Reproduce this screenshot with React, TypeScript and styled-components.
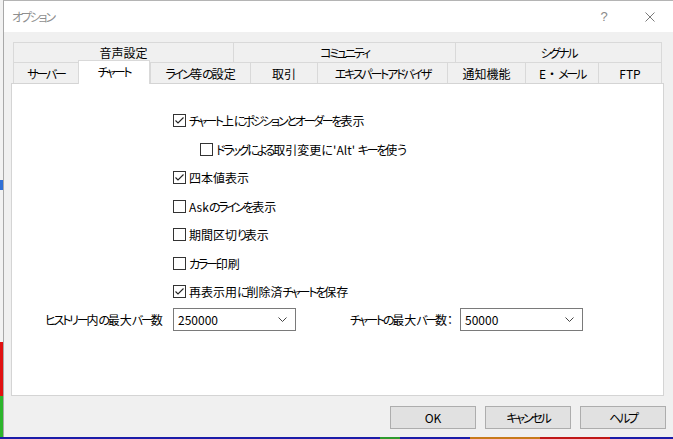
import React from "react";
import styled, { createGlobalStyle } from "styled-components";

const Global = createGlobalStyle`
  html, body { margin: 0; padding: 0; background: #ffffff; }
  body {
    font-family: "Noto Sans CJK JP", "Noto Sans", sans-serif;
    font-feature-settings: "palt";
    font-size: 12px;
    color: #000;
  }
  * { box-sizing: border-box; }
`;

const Page = styled.div`
  width: 673px;
  height: 439px;
  display: flex;
  flex-direction: column;
  overflow: hidden;
`;

const Main = styled.div`
  display: flex;
  flex: 1;
  min-height: 0;
`;

const Backdrop = styled.div`
  width: 3px;
  background: linear-gradient(
    to bottom,
    #f2f2f2 0px,
    #f2f2f2 180px,
    #2f6fd6 180px,
    #2f6fd6 190px,
    #f2f2f2 190px,
    #f2f2f2 342px,
    #e01010 342px,
    #e01010 396px,
    #2cb52c 396px,
    #2cb52c 100%
  );
`;

const BottomStrip = styled.div`
  height: 2px;
  background: linear-gradient(
    to right,
    #1c1ca8 0px,
    #1c1ca8 380px,
    #2e9a2e 380px,
    #2e9a2e 400px,
    #1c1ca8 400px,
    #1c1ca8 470px,
    #c87a1a 470px,
    #c87a1a 540px,
    #c01818 540px,
    #c01818 610px,
    #1c1ca8 610px
  );
`;

const Window = styled.div`
  flex: 1;
  display: flex;
  flex-direction: column;
  border-left: 1px solid #a8a8a8;
  border-top: 1px solid #b4b4b4;
  background: #f0f0f0;
`;

const TitleBar = styled.div`
  height: 31px;
  background: #ffffff;
  display: flex;
  align-items: center;
  justify-content: space-between;
  padding-left: 8px;
`;

const Title = styled.span`
  color: #8f8f8f;
  font-size: 12px;
`;

const TitleButtons = styled.div`
  display: flex;
  height: 100%;
`;

const TitleButton = styled.div`
  width: 46px;
  height: 100%;
  display: flex;
  align-items: center;
  justify-content: center;
  color: #8a8a8a;
  font-family: "Liberation Sans", "Noto Sans", sans-serif;
  font-size: 13px;
`;

const Body = styled.div`
  flex: 1;
  display: flex;
  flex-direction: column;
  padding: 10px 7px 0 7px;
`;

const Tabs = styled.div`
  display: flex;
  flex-direction: column;
  margin-left: 2px;
`;

const TabRow = styled.div<{ $h: number }>`
  display: flex;
  align-items: flex-end;
  height: ${(p) => p.$h}px;
`;

const Tab = styled.div<{ $w: number; $h: number; $last?: boolean }>`
  width: ${(p) => p.$w}px;
  height: ${(p) => p.$h}px;
  display: flex;
  align-items: center;
  justify-content: center;
  border-top: 1px solid #d9d9d9;
  border-left: 1px solid #d9d9d9;
  border-right: ${(p) => (p.$last ? "1px solid #d9d9d9" : "none")};
  background: #f0f0f0;
  color: #000;
  font-size: 12px;
  white-space: nowrap;
`;

const ActiveTab = styled.div<{ $w: number }>`
  position: relative;
  z-index: 1;
  width: ${(p) => p.$w}px;
  height: 24px;
  margin-bottom: -1px;
  display: flex;
  align-items: center;
  justify-content: center;
  padding-bottom: 2px;
  background: #ffffff;
  border: 1px solid #d9d9d9;
  border-bottom: none;
  font-size: 12px;
  white-space: nowrap;
`;

const Panel = styled.div`
  height: 313px;
  margin-right: 2px;
  background: #ffffff;
  border: 1px solid #d4d4d4;
  display: flex;
  flex-direction: column;
`;

const OptionList = styled.div`
  display: flex;
  flex-direction: column;
  gap: 15.5px;
  margin: 30px 0 0 161px;
`;

const OptionRow = styled.label<{ $indent?: number }>`
  display: flex;
  align-items: center;
  height: 13px;
  gap: 3px;
  margin-left: ${(p) => p.$indent ?? 0}px;
  font-size: 12px;
  line-height: 13px;
  white-space: nowrap;
`;

const Box = styled.span`
  width: 13px;
  height: 13px;
  border: 1px solid #333333;
  background: #ffffff;
  display: inline-flex;
  flex-shrink: 0;
`;

const ComboRow = styled.div`
  display: flex;
  align-items: center;
  margin: 9.5px 0 0 33px;
`;

const ComboGroup = styled.div<{ $gap: number }>`
  display: flex;
  align-items: center;
  margin-left: ${(p) => p.$gap}px;
`;

const ComboLabel = styled.span<{ $w: number }>`
  width: ${(p) => p.$w}px;
  font-size: 12px;
  white-space: nowrap;
`;

const Combo = styled.div`
  width: 123px;
  height: 23px;
  border: 1px solid #7a7a7a;
  background: #ffffff;
  display: flex;
  align-items: center;
  justify-content: space-between;
  padding: 0 8px 0 4px;
  font-size: 12px;
`;

const ButtonBar = styled.div`
  display: flex;
  justify-content: flex-end;
  gap: 9px;
  margin-top: 10px;
`;

const Button = styled.div`
  width: 86px;
  height: 23px;
  background: #e1e1e1;
  border: 1px solid #adadad;
  display: flex;
  align-items: center;
  justify-content: center;
  font-size: 12px;
`;

const Kana = styled.span<{ $pad?: boolean }>`
  letter-spacing: -2.2px;
  margin-right: ${(p) => (p.$pad ? "2.5px" : "0")};
`;

const FullWidth = styled.span`
  font-feature-settings: normal;
`;

const KANA_RUN = /([\u3040-\u30fa\u30fc-\u30ff]+|・)/;

function JText({ children }: { children: string }) {
  const parts = children.split(KANA_RUN).filter((p) => p !== "");
  return (
    <>
      {parts.map((p, i) => {
        if (p === "・") return <FullWidth key={i}>{p}</FullWidth>;
        if (/^[\u3040-\u30ff]/.test(p)) {
          const next = parts[i + 1];
          const pad = !!next && /^[\x20-\x7e]/.test(next);
          return (
            <Kana key={i} $pad={pad}>
              {p}
            </Kana>
          );
        }
        return <React.Fragment key={i}>{p}</React.Fragment>;
      })}
    </>
  );
}

const Check = () => (
  <svg width="11" height="11" viewBox="0 0 11 11">
    <path d="M1.5 5.5 L4 8 L9.5 2.5" fill="none" stroke="#222" strokeWidth="1.1" />
  </svg>
);

const Chevron = () => (
  <svg width="9" height="5" viewBox="0 0 9 5">
    <path d="M0.5 0.5 L4.5 4.5 L8.5 0.5" fill="none" stroke="#444" strokeWidth="1" />
  </svg>
);

const CloseIcon = () => (
  <svg width="10" height="10" viewBox="0 0 10 10">
    <path d="M0.5 0.5 L9.5 9.5 M9.5 0.5 L0.5 9.5" stroke="#7a7a7a" strokeWidth="1" />
  </svg>
);

const options: { text: string; checked: boolean; indent?: number }[] = [
  { text: "チャート上にポジションとオーダーを表示", checked: true },
  { text: "ドラッグによる取引変更に'Alt' キーを使う", checked: false, indent: 27 },
  { text: "四本値表示", checked: true },
  { text: "Askのラインを表示", checked: false },
  { text: "期間区切り表示", checked: false },
  { text: "カラー印刷", checked: false },
  { text: "再表示用に削除済チャートを保存", checked: true },
];

const topTabs = [
  { label: "音声設定", w: 220 },
  { label: "コミュニティ", w: 222 },
  { label: "シグナル", w: 207 },
];

const bottomTabs = [
  { label: "サーバー", w: 65 },
  { label: "チャート", w: 72, active: true },
  { label: "ライン等の設定", w: 100 },
  { label: "取引", w: 67 },
  { label: "エキスパートアドバイザ", w: 130 },
  { label: "通知機能", w: 78 },
  { label: "E・メール", w: 73 },
  { label: "FTP", w: 64 },
];

export default function App() {
  return (
    <>
      <Global />
      <Page>
        <Main>
          <Backdrop />
          <Window>
            <TitleBar>
              <Title>
                <JText>オプション</JText>
              </Title>
              <TitleButtons>
                <TitleButton>?</TitleButton>
                <TitleButton>
                  <CloseIcon />
                </TitleButton>
              </TitleButtons>
            </TitleBar>
            <Body>
              <Tabs>
                <TabRow $h={20}>
                  {topTabs.map((t, i) => (
                    <Tab key={t.label} $w={t.w} $h={20} $last={i === topTabs.length - 1}>
                      <JText>{t.label}</JText>
                    </Tab>
                  ))}
                </TabRow>
                <TabRow $h={21}>
                  {bottomTabs.map((t, i) =>
                    t.active ? (
                      <ActiveTab key={t.label} $w={t.w}>
                        <JText>{t.label}</JText>
                      </ActiveTab>
                    ) : (
                      <Tab key={t.label} $w={t.w} $h={21} $last={i === bottomTabs.length - 1}>
                        <JText>{t.label}</JText>
                      </Tab>
                    )
                  )}
                </TabRow>
              </Tabs>
              <Panel>
                <OptionList>
                  {options.map((o) => (
                    <OptionRow key={o.text} $indent={o.indent}>
                      <Box>{o.checked && <Check />}</Box>
                      <span>
                        <JText>{o.text}</JText>
                      </span>
                    </OptionRow>
                  ))}
                </OptionList>
                <ComboRow>
                  <ComboGroup $gap={0}>
                    <ComboLabel $w={128}>
                      <JText>ヒストリー内の最大バー数</JText>
                    </ComboLabel>
                    <Combo>
                      <span>250000</span>
                      <Chevron />
                    </Combo>
                  </ComboGroup>
                  <ComboGroup $gap={54}>
                    <ComboLabel $w={110}>
                      <JText>チャートの最大バー数：</JText>
                    </ComboLabel>
                    <Combo>
                      <span>50000</span>
                      <Chevron />
                    </Combo>
                  </ComboGroup>
                </ComboRow>
              </Panel>
              <ButtonBar>
                <Button>OK</Button>
                <Button>
                  <JText>キャンセル</JText>
                </Button>
                <Button>
                  <JText>ヘルプ</JText>
                </Button>
              </ButtonBar>
            </Body>
          </Window>
        </Main>
        <BottomStrip />
      </Page>
    </>
  );
}
